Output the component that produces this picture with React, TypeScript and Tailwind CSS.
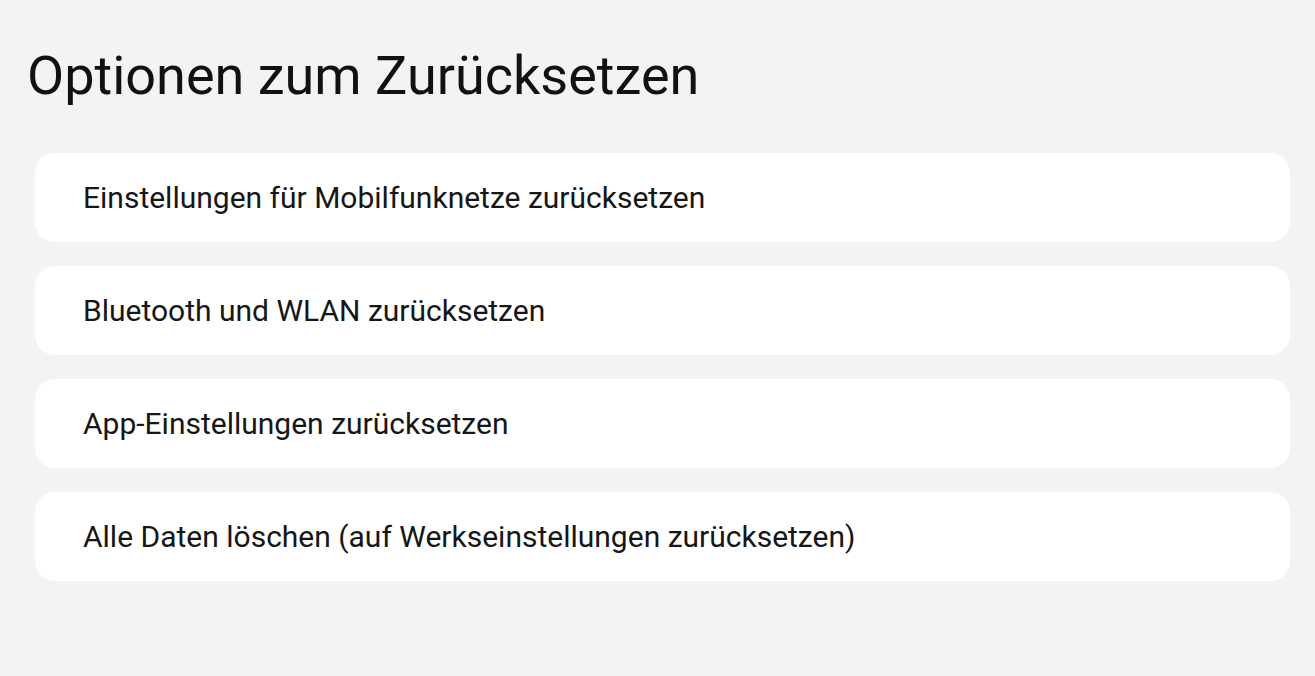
import React from 'react';

const options = [
  'Einstellungen für Mobilfunknetze zurücksetzen',
  'Bluetooth und WLAN zurücksetzen',
  'App-Einstellungen zurücksetzen',
  'Alle Daten löschen (auf Werkseinstellungen zurücksetzen)',
];

const App = () => {
  return (
    <div
      className="min-h-[676px] w-full bg-[#f3f3f5] text-[#111111]"
      style={{ fontFamily: 'Roboto, "Liberation Sans", sans-serif' }}
    >
      <div className="pl-[27px] pr-[25px] pt-[44px]">
        <h1 className="text-[54px] leading-[64px] font-normal">
          Optionen zum Zurücksetzen
        </h1>

        <div className="mt-[45px] ml-[8px] flex flex-col gap-[24px]">
          {options.map((label) => (
            <div
              key={label}
              className="flex h-[89px] items-center rounded-[20px] bg-white pl-[48px]"
            >
              <span className="text-[30px] leading-[36px] text-[#161616]">{label}</span>
            </div>
          ))}
        </div>
      </div>
    </div>
  );
};

export default App;
